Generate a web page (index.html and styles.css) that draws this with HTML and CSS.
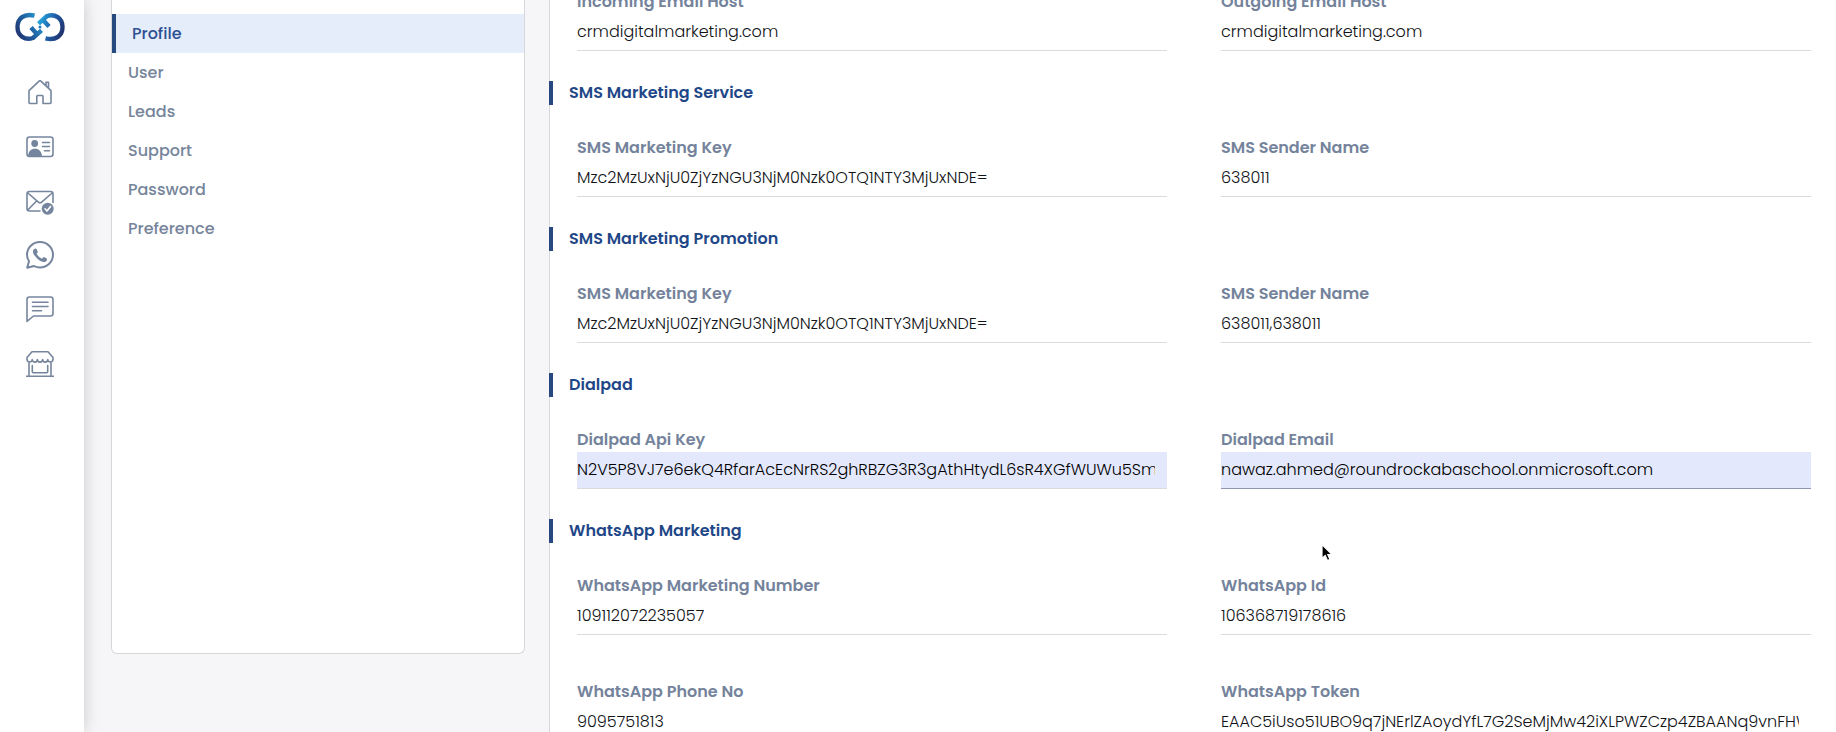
FILE: index.html
```html
<!DOCTYPE html>
<html lang="en">
<head>
<meta charset="utf-8">
<title>Profile</title>
<link rel="stylesheet" href="styles.css">
</head>
<body>
<div class="app">
  <nav class="rail" aria-label="Main">
    <a class="logo" href="#" aria-label="Dashboard">
      <svg width="52" height="30" viewBox="0 0 52 30" fill="none">
        <defs>
          <linearGradient id="lg" gradientUnits="userSpaceOnUse" x1="2" y1="24" x2="33" y2="6"><stop offset="0" stop-color="#22306b"/><stop offset=".4" stop-color="#1f5c9c"/><stop offset="1" stop-color="#27b0e6"/></linearGradient>
          <linearGradient id="rg" gradientUnits="userSpaceOnUse" x1="24" y1="10" x2="50" y2="20"><stop offset="0" stop-color="#27a6dc"/><stop offset=".5" stop-color="#1f5fa8"/><stop offset="1" stop-color="#22306b"/></linearGradient>
        </defs>
        <path d="M20.500 3.600C10 1 3.500 6.500 3.500 15C3.500 24 11 28.500 19 26L27.500 18.300M17 15.500L22.500 21.500" stroke="url(#lg)" stroke-width="4.400"/>
        <path d="M31.500 26.400C42 29 48.500 23.500 48.500 15C48.500 6 41 1.500 33 4L24.500 11.700M29.500 8.500L35 14.500" stroke="url(#rg)" stroke-width="4.400"/>
        <circle cx="26" cy="15" r="1.500" fill="#2279be"/>
      </svg>
    </a>
    <a class="rail-link" href="#" aria-label="Home">
      <svg width="28" height="28" viewBox="0 0 28 28"><path d="M3 11.600V23.600Q3 24.500 4 24.500H10.800V17.300Q10.800 16.500 11.600 16.500H16.200Q17 16.500 17 17.300V24.500H24Q25 24.500 25 23.600V11.600L14.600 1.900Q14 1.400 13.400 1.900ZM20 6.500V3.200H22.500V9"/></svg>
    </a>
    <a class="rail-link" href="#" aria-label="Contacts">
      <svg width="28" height="28" viewBox="0 0 28 28"><rect x="1" y="4" width="26" height="19.500" rx="2.500"/><path d="M16.500 9.500H23.500M16.500 13.500H23.500M18.500 17.800H23.500"/><circle class="solid" cx="8.700" cy="10.500" r="3.400"/><path class="solid" d="M2 23C2.500 18 5 15.800 9 15.800S15.500 18.500 16 23Z"/></svg>
    </a>
    <a class="rail-link" href="#" aria-label="Email">
      <svg width="28" height="28" viewBox="0 0 28 28"><path d="M14 24H3.500Q1 24 1 21.500V7Q1 4.500 3.500 4.500H24.500Q27 4.500 27 7V15.500M1.800 6L12.700 15.400Q14 16.500 15.300 15.400L26.200 6M1.800 23L10.500 14"/><circle class="solid" cx="21.700" cy="21.800" r="6"/><path class="tick" d="M19 21.800L21 24L24.500 19.500"/></svg>
    </a>
    <a class="rail-link" href="#" aria-label="WhatsApp">
      <svg width="28" height="28" viewBox="0 0 28 28"><path class="heavy" d="M1.200 26.800L3 20.300C1.600 18 1 15.800 1 13.800C1 6.800 6.800 1.100 14 1.100S27 6.800 27 13.800S21.200 26.600 14 26.600C11.800 26.600 9.800 26 8 25Z"/><path class="solid" d="M8.800 7.700C9.700 7.200 10.400 7.500 10.700 8.200L11.700 10.600C12 11.500 10.900 12.300 10.700 12.700C11.800 15 13.600 16.700 16 17.700C16.500 17.600 17.300 16 18 16.100L20.800 17.500C21.500 18.100 20.600 20.300 19.500 20.700C17 21.600 13.500 19.900 10.900 17.200C8.300 14.500 6.800 12.300 6.900 10.200C7 9 7.800 8.100 8.800 7.700Z"/></svg>
    </a>
    <a class="rail-link" href="#" aria-label="Messages">
      <svg width="28" height="28" viewBox="0 0 28 28"><path d="M1 26.300V4.500Q1 2 3.500 2H24.500Q27 2 27 4.500V18.500Q27 21 24.500 21H7.500ZM6.500 7.300H22M6.500 11.500H22M6.500 15.700H15.500"/></svg>
    </a>
    <a class="rail-link" href="#" aria-label="Store">
      <svg width="28" height="28" viewBox="0 0 28 28"><path d="M6 2.800H22L27 8.500V10C27 14 21.800 14 21.800 10.500C21.800 14 16.600 14 16.600 10.500C16.600 14 11.400 14 11.400 10.500C11.400 14 6.200 14 6.200 10.500C6.200 14 1 14 1 10V8.500ZM3 14V27M25 14V27M0.500 27.200H27.500M6.300 16.500V22.800Q6.300 23.800 7.300 23.800H20.700Q21.700 23.800 21.700 22.800V16.500"/></svg>
    </a>
  </nav>

  <main class="main">
    <aside class="menu" aria-label="Settings">
      <a class="menu-item active" href="#" aria-current="page">Profile</a>
      <a class="menu-item" href="#">User</a>
      <a class="menu-item" href="#">Leads</a>
      <a class="menu-item" href="#">Support</a>
      <a class="menu-item" href="#">Password</a>
      <a class="menu-item" href="#">Preference</a>
    </aside>

    <form class="panel">
      <div class="fields">
        <div class="field"><label for="in-host">Incoming Email Host</label><input id="in-host" type="text" value="crmdigitalmarketing.com"></div>
        <div class="field"><label for="out-host">Outgoing Email Host</label><input id="out-host" type="text" value="crmdigitalmarketing.com"></div>
      </div>

      <h2 class="heading">SMS Marketing Service</h2>
      <div class="fields">
        <div class="field"><label for="sms-key">SMS Marketing Key</label><input id="sms-key" type="text" value="Mzc2MzUxNjU0ZjYzNGU3NjM0Nzk0OTQ1NTY3MjUxNDE="></div>
        <div class="field"><label for="sms-name">SMS Sender Name</label><input id="sms-name" type="text" value="638011"></div>
      </div>

      <h2 class="heading">SMS Marketing Promotion</h2>
      <div class="fields">
        <div class="field"><label for="promo-key">SMS Marketing Key</label><input id="promo-key" type="text" value="Mzc2MzUxNjU0ZjYzNGU3NjM0Nzk0OTQ1NTY3MjUxNDE="></div>
        <div class="field"><label for="promo-name">SMS Sender Name</label><input id="promo-name" type="text" value="638011,638011"></div>
      </div>

      <h2 class="heading">Dialpad</h2>
      <div class="fields">
        <div class="field"><label for="dial-key">Dialpad Api Key</label><input class="filled" id="dial-key" type="text" value="N2V5P8VJ7e6ekQ4RfarAcEcNrRS2ghRBZG3R3gAthHtydL6sR4XGfWUWu5SmJH"></div>
        <div class="field"><label for="dial-email">Dialpad Email</label><input class="filled current" id="dial-email" type="email" value="nawaz.ahmed@roundrockabaschool.onmicrosoft.com"></div>
      </div>

      <h2 class="heading">WhatsApp Marketing</h2>
      <div class="fields">
        <div class="field"><label for="wa-number">WhatsApp Marketing Number</label><input id="wa-number" type="text" value="109112072235057"></div>
        <div class="field"><label for="wa-id">WhatsApp Id</label><input id="wa-id" type="text" value="106368719178616"></div>
        <div class="field"><label for="wa-phone">WhatsApp Phone No</label><input id="wa-phone" type="text" value="9095751813"></div>
        <div class="field"><label for="wa-token">WhatsApp Token</label><input id="wa-token" type="text" value="EAAC5iUso51UBO9q7jNErlZAoydYfL7G2SeMjMw42iXLPWZCzp4ZBAANq9vnFHW."></div>
      </div>
    </form>
  </main>
</div>
<svg class="pointer" width="14" height="20" viewBox="0 0 14 20"><path d="M2 1.500V15.500L5.200 12.500L7.500 17.500L10 16.400L7.800 11.500H12Z" fill="#000" stroke="#fff" stroke-width="1.200"/></svg>
</body>
</html>
```

FILE: styles.css
```css
* { box-sizing: border-box; }

body {
  margin: 0;
  overflow: hidden;
  background: #f6f6f9;
  font-family: Poppins, Inter, "Liberation Sans", sans-serif;
  font-size: 16px;
  line-height: 24px;
}

a { text-decoration: none; }

.app {
  display: flex;
  height: 100vh;
}

.rail {
  flex: none;
  display: flex;
  flex-direction: column;
  align-items: center;
  gap: 26px;
  width: 84px;
  padding: 12px 4px 0 0;
  background: #fff;
  box-shadow: 0 0 16px rgba(0, 0, 0, 0.18);
}

.logo {
  height: 30px;
  margin-bottom: 11px;
}

.rail svg { display: block; }

.rail-link svg {
  fill: none;
  stroke: #76859e;
  stroke-width: 1.6;
  stroke-linecap: round;
  stroke-linejoin: round;
}

.rail-link .heavy { stroke-width: 2; }
.rail-link .solid { fill: #76859e; stroke: none; }
.rail-link .tick { stroke: #fff; }

.main {
  flex: 1;
  display: flex;
  align-items: flex-start;
  gap: 24px;
  min-width: 0;
  padding-left: 27px;
}

.menu {
  flex: 0 0 414px;
  height: calc(100vh - 78px);
  padding-top: 14px;
  background: #fff;
  border: 1px solid #d6d7d9;
  border-top: 0;
  border-radius: 0 0 6px 6px;
}

.menu-item {
  display: block;
  padding: 8px 16px 7px;
  color: #76859b;
  font-weight: 500;
}

.menu-item.active {
  border-left: 4px solid #264a80;
  background: #e5ecfa;
  color: #2d5190;
}

.panel {
  flex: 1;
  min-width: 0;
  margin-top: -10px;
  background: #fff;
  border-left: 1px solid #d6d7d9;
}

.heading {
  margin: 30px 0 31px -1px;
  padding-left: 16px;
  border-left: 4px solid #264a80;
  color: #1f4788;
  font-size: 16px;
  line-height: 24px;
  font-weight: 600;
}

.fields {
  display: grid;
  grid-template-columns: 1fr 1fr;
  gap: 45px 54px;
  padding: 0 25px 0 27px;
}

.field {
  display: flex;
  flex-direction: column;
  min-width: 0;
}

.field label {
  color: #74839b;
  font-weight: 600;
}

.field input {
  width: 100%;
  height: 37px;
  padding: 0 12px 2px 0;
  border: 0;
  border-bottom: 1px solid #d8dcdf;
  border-radius: 0;
  outline: 0;
  background: transparent;
  color: #111317;
  font: inherit;
  font-weight: 300;
}

.field .filled {
  background: #e3e8fc;
  color: #000;
}

.field .current { border-bottom-color: #8d98ae; }

.pointer {
  position: absolute;
  left: 1320px;
  top: 543px;
}
```
